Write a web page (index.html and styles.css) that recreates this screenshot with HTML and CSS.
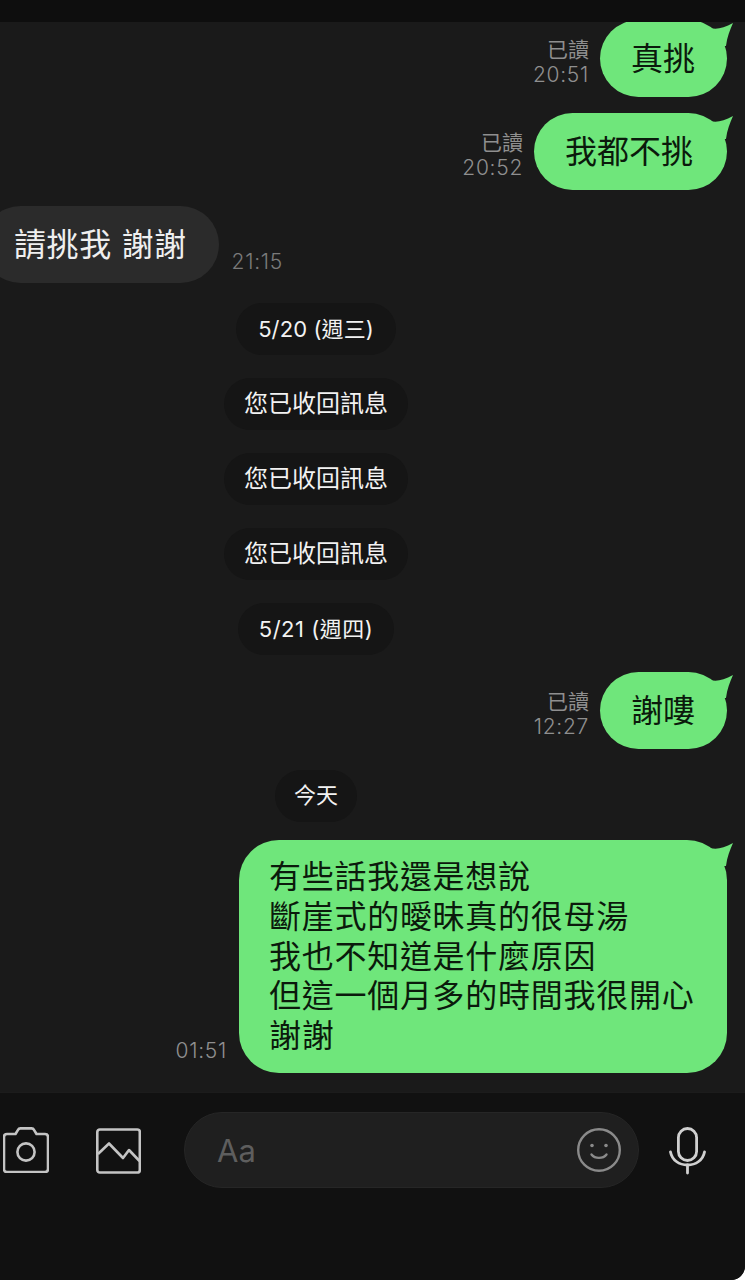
FILE: index.html
```html
<!DOCTYPE html>
<html lang="zh-Hant">
<head>
<meta charset="utf-8">
<title>聊天</title>
<link rel="stylesheet" href="styles.css">
</head>
<body>
<svg class="defs" width="0" height="0" aria-hidden="true">
  <symbol id="tail" viewBox="0 0 28 30"><path d="M0 6C6 10 15 10 27 3C24 10 21 17 20 26L0 26Z"/></symbol>
</svg>
<div class="app">
  <div class="topbar"></div>
  <main class="chat">
    <div class="row out first">
      <div class="meta"><span>已讀</span><span class="time">20:51</span></div>
      <div class="bubble green short">真挑<svg class="tail"><use href="#tail"/></svg></div>
    </div>
    <div class="row out gap16">
      <div class="meta"><span>已讀</span><span class="time">20:52</span></div>
      <div class="bubble green">我都不挑<svg class="tail"><use href="#tail"/></svg></div>
    </div>
    <div class="row in gap16">
      <div class="bubble grey">請挑我 謝謝</div>
      <div class="meta"><span class="time">21:15</span></div>
    </div>
    <div class="notices">
      <div class="pill date">5/20 (週三)</div>
      <div class="pill">您已收回訊息</div>
      <div class="pill">您已收回訊息</div>
      <div class="pill">您已收回訊息</div>
      <div class="pill date spaced">5/21 (週四)</div>
    </div>
    <div class="row out gap17">
      <div class="meta"><span>已讀</span><span class="time">12:27</span></div>
      <div class="bubble green short">謝嘍<svg class="tail"><use href="#tail"/></svg></div>
    </div>
    <div class="notices today">
      <div class="pill date narrow">今天</div>
    </div>
    <div class="row out gap18">
      <div class="meta meta-wide"><span class="time">01:51</span></div>
      <div class="bubble green multi">有些話我還是想說<br>斷崖式的曖昧真的很母湯<br>我也不知道是什麼原因<br>但這一個月多的時間我很開心<br>謝謝<svg class="tail"><use href="#tail"/></svg></div>
    </div>
  </main>
  <footer class="composer">
    <svg class="icon camera" viewBox="0 0 46 46" fill="none" stroke="#c4c4c4" stroke-width="2.6" stroke-linejoin="round">
      <path d="M4 7H12.500L15 2.800C15.500 1.800 16 1.400 17.500 1.400H28.500C30 1.400 30.500 1.800 31 2.800L33.500 7H42C44 7 45 8 45 10V42C45 44 44 45 42 45H4C2 45 1 44 1 42V10C1 8 2 7 4 7Z"/>
      <circle cx="23" cy="25" r="8.600"/>
    </svg>
    <svg class="icon picture" viewBox="0 0 45 46" fill="none" stroke="#c4c4c4" stroke-width="2.6" stroke-linejoin="round">
      <rect x="1.300" y="1.500" width="42.500" height="43" rx="2.500"/>
      <path d="M2 26L13 15.500L27 30L33 22L43.500 33"/>
    </svg>
    <div class="input">
      <span class="placeholder">Aa</span>
      <svg class="smile" viewBox="0 0 44 44" fill="none" stroke="#8a8a8a" stroke-width="2.400" stroke-linecap="round">
        <circle cx="22" cy="22" r="20.800"/>
        <path d="M14.500 26.500C18 31 26 31 29.500 26.500"/>
        <circle cx="15" cy="17.500" r="1.800" fill="#8a8a8a" stroke="none"/>
        <circle cx="29" cy="17.500" r="1.800" fill="#8a8a8a" stroke="none"/>
      </svg>
    </div>
    <svg class="icon mic" viewBox="0 0 37 48" fill="none" stroke="#d0d0d0" stroke-width="2.800" stroke-linecap="round">
      <rect x="9.400" y="1.500" width="18.200" height="32" rx="9.100"/>
      <path d="M1.500 25C3 33 10 38 18.500 38C27 38 34 33 35.500 25"/>
      <path d="M18.500 38V46"/>
    </svg>
  </footer>
</div>
</body>
</html>
```
FILE: styles.css
```css
* { box-sizing: border-box; }
html, body { margin: 0; padding: 0; background: #fff; }
.defs { position: absolute; }
.app {
  width: 745px;
  height: 1280px;
  display: flex;
  flex-direction: column;
  overflow: hidden;
  background: #111;
  border-bottom-right-radius: 14px;
  font-family: Inter, "Noto Sans CJK TC", sans-serif;
}
.topbar { height: 22px; flex: none; background: #0e0e0e; }
.chat {
  height: 1070px;
  flex: none;
  display: flex;
  flex-direction: column;
  overflow: hidden;
  background: #1a1a1a;
}
.row { display: flex; align-items: flex-end; }
.row.out { justify-content: flex-end; padding-right: 18px; }
.row.in { justify-content: flex-start; margin-left: -18px; }
.first { margin-top: -2px; }
.gap16 { margin-top: 16px; }
.gap17 { margin-top: 17px; }
.gap18 { margin-top: 18px; }
.meta {
  display: flex;
  flex-direction: column;
  align-items: flex-end;
  margin: 0 11px 10px 0;
  font-size: 21px;
  line-height: 25px;
  color: #8f8f8f;
}
.time { font-weight: 300; letter-spacing: 0.700px; }
.meta-wide { margin-right: 12px; }
.in .meta { margin: 0 0 9px 13px; color: #7a7a7a; }
.bubble {
  position: relative;
  height: 77px;
  border-radius: 38.5px;
  padding: 0 34px 0 31px;
  font-size: 32px;
  line-height: 77px;
  white-space: nowrap;
}
.short { padding: 0 32px 0 31px; }
.green { background: #6fe67b; color: #0b1a0c; }
.grey { background: #2b2b2b; color: #efefef; padding: 0 32px; letter-spacing: 0.600px; }
.multi {
  height: 233px;
  width: 488px;
  padding: 17px 0 0 30px;
  border-radius: 40px;
  line-height: 39.800px;
  letter-spacing: 0.720px;
}
.tail {
  position: absolute;
  top: 0;
  right: -7px;
  width: 28px;
  height: 30px;
  fill: #6fe67b;
}
.notices {
  display: flex;
  flex-direction: column;
  align-items: center;
  gap: 23px;
  width: 632px;
  margin-top: 20px;
}
.today { margin-top: 21px; }
.pill {
  height: 52px;
  padding: 0 20px;
  border-radius: 26px;
  background: #151515;
  color: #f2f2f2;
  font-size: 24px;
  line-height: 52px;
}
.pill.date { padding: 0 22px; font-size: 22px; line-height: 52px; letter-spacing: 0.100px; }
.pill.spaced { padding: 0 21px; letter-spacing: 0.500px; }
.pill.narrow { padding: 0 19px; line-height: 50px; }
.composer {
  flex: 1;
  display: flex;
  align-items: flex-start;
  padding: 19px 0 0 3px;
  background: #111;
  border-top: 1px solid #1c1c1c;
}
.icon { flex: none; display: block; }
.camera { width: 46px; height: 46px; margin-top: 15px; }
.picture { width: 45px; height: 46px; margin: 16px 0 0 47px; }
.input {
  flex: none;
  width: 455px;
  height: 76px;
  margin-left: 43px;
  padding: 0 17px 0 32px;
  display: flex;
  align-items: center;
  justify-content: space-between;
  border-radius: 38px;
  background: #1f1f1f;
  border: 1px solid #262626;
}
.placeholder { font-size: 31px; color: #5e5e5e; }
.smile { width: 44px; height: 44px; flex: none; }
.mic { width: 37px; height: 48px; margin: 15px 0 0 30px; }
```
